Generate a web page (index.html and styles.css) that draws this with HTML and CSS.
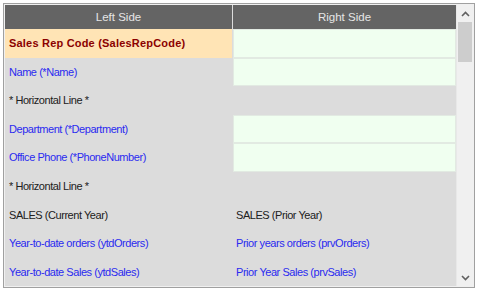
FILE: index.html
```html
<!DOCTYPE html>
<html lang="en">
<head>
  <meta charset="UTF-8">
  <meta name="viewport" content="width=device-width, initial-scale=1.0">
  <title>Layout Editor</title>
  <link rel="stylesheet" href="styles.css">
</head>
<body>

  <div class="frame">
    <div class="grid">
      <div class="head">Left Side</div>
      <div class="head">Right Side</div>

      <div class="cell key">Sales Rep Code (SalesRepCode)</div>
      <div class="cell input"></div>

      <div class="cell field">Name (*Name)</div>
      <div class="cell input"></div>

      <div class="cell">* Horizontal Line *</div>
      <div class="cell"></div>

      <div class="cell field">Department (*Department)</div>
      <div class="cell input"></div>

      <div class="cell field">Office Phone (*PhoneNumber)</div>
      <div class="cell input"></div>

      <div class="cell">* Horizontal Line *</div>
      <div class="cell"></div>

      <div class="cell">SALES (Current Year)</div>
      <div class="cell right">SALES (Prior Year)</div>

      <div class="cell field">Year-to-date orders (ytdOrders)</div>
      <div class="cell field right">Prior years orders (prvOrders)</div>

      <div class="cell field">Year-to-date Sales (ytdSales)</div>
      <div class="cell field right">Prior Year Sales (prvSales)</div>
    </div>

    <div class="scrollbar">
      <div class="arrow">
        <svg width="9" height="6" viewBox="0 0 9 6"><polyline points="1,5 4.5,1.5 8,5" fill="none" stroke="#606060" stroke-width="1.6"/></svg>
      </div>
      <div class="track">
        <div class="thumb"></div>
      </div>
      <div class="arrow">
        <svg width="9" height="6" viewBox="0 0 9 6"><polyline points="1,1 4.5,4.5 8,1" fill="none" stroke="#606060" stroke-width="1.6"/></svg>
      </div>
    </div>
  </div>

</body>
</html>
```

FILE: styles.css
```css
* {
  box-sizing: border-box;
  margin: 0;
  padding: 0;
}

body {
  background: #ffffff;
  font-family: "Liberation Sans", Arial, sans-serif;
  font-size: 11px;
}

.frame {
  display: flex;
  margin: 3px;
  width: 472px;
  height: 285px;
  border: 1px solid #a0a0a0;
  padding: 1px;
  background: #f0f0f0;
}

.grid {
  flex: 1;
  display: grid;
  grid-template-columns: 227px 1fr;
  grid-template-rows: 24px repeat(9, 1fr);
  column-gap: 1px;
  background: #dcdcdc;
}

.head {
  background: #646464;
  color: #e6e6e6;
  display: flex;
  align-items: center;
  justify-content: center;
  font-size: 11.5px;
}

.cell {
  display: flex;
  align-items: center;
  padding-left: 4px;
  color: #202020;
  background: #dcdcdc;
  letter-spacing: -0.45px;
}

.cell.right {
  padding-left: 3px;
}

.key {
  background: #ffe4b5;
  color: #8b0000;
  font-weight: bold;
  letter-spacing: 0.2px;
}

.field {
  color: #2a2af0;
}

.input {
  background: #f0fff0;
  border: 1px solid #e2eae2;
}

.scrollbar {
  width: 17px;
  display: flex;
  flex-direction: column;
  background: #f0f0f0;
  border-left: 1px solid #e8e8e8;
}

.arrow {
  height: 17px;
  display: flex;
  align-items: center;
  justify-content: center;
}

.track {
  flex: 1;
  padding: 0 1px;
}

.thumb {
  height: 40px;
  background: #cdcdcd;
}
```
